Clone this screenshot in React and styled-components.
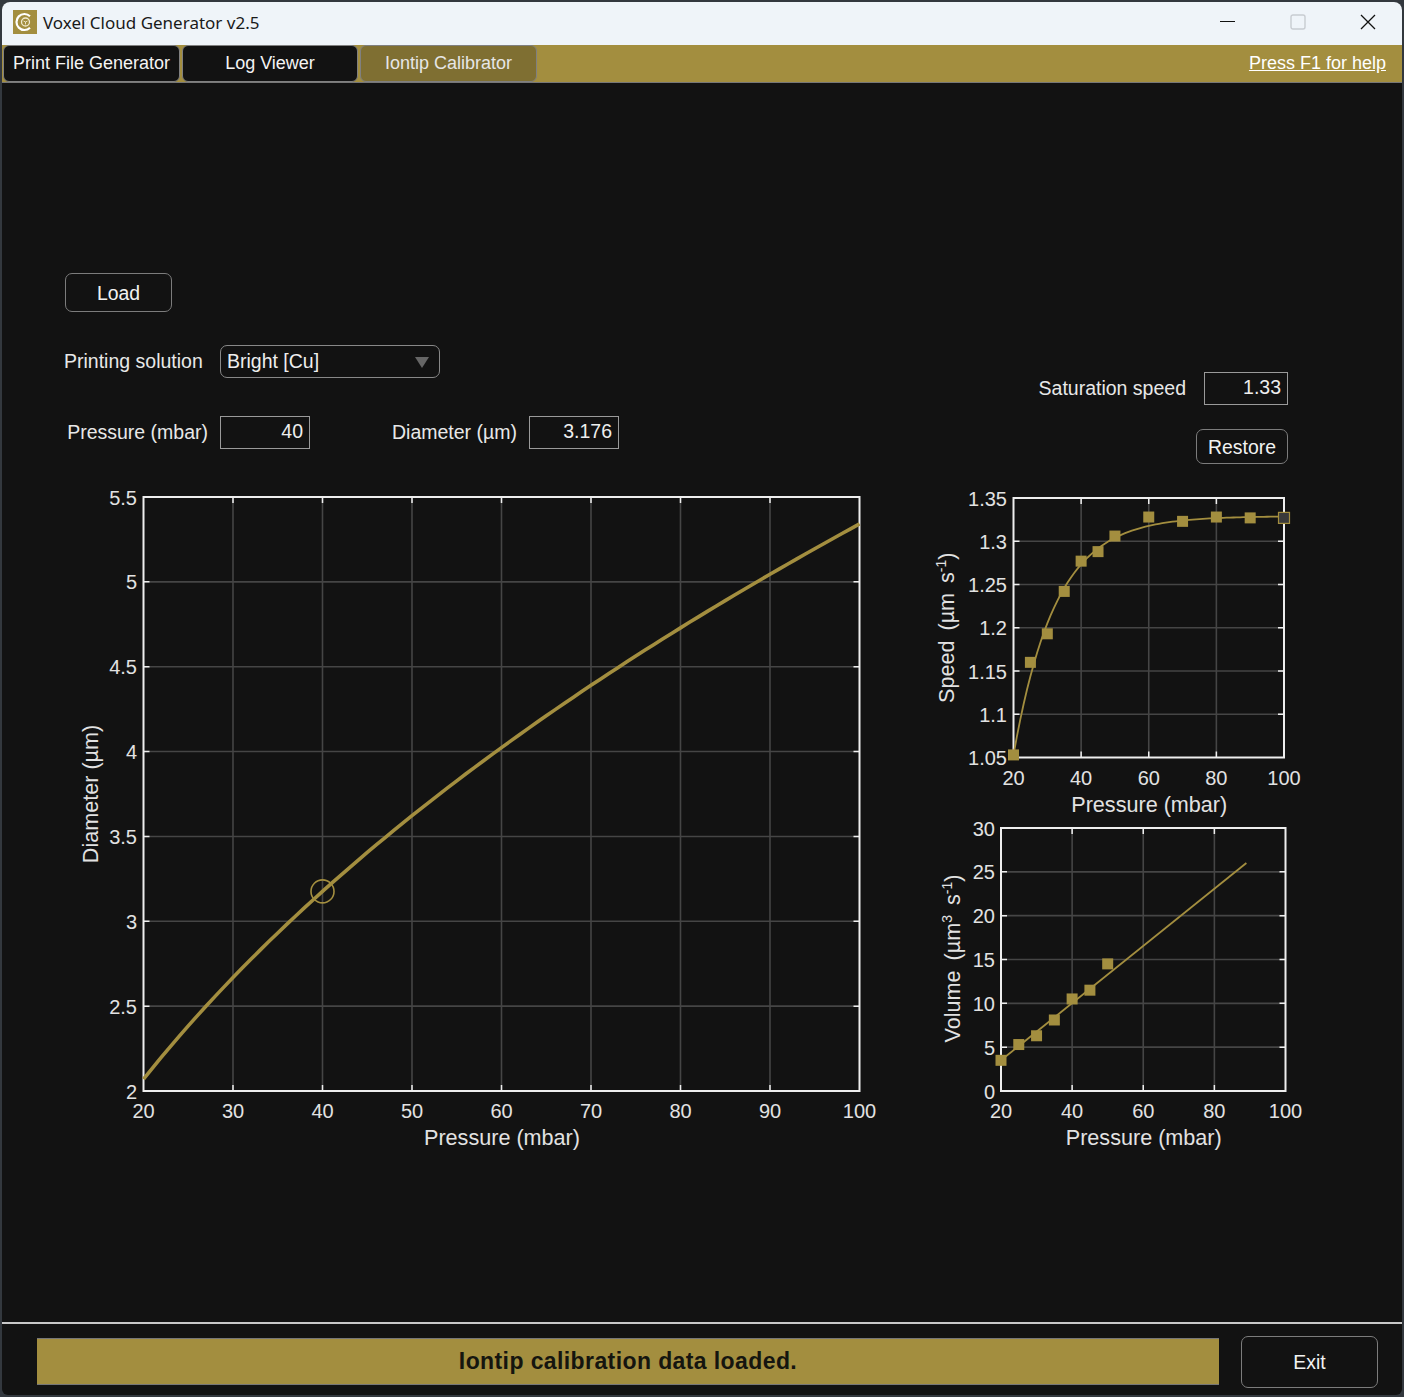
import React from 'react'
import styled, { createGlobalStyle } from 'styled-components'

const GOLD = '#a38e3f'

const GlobalStyle = createGlobalStyle`
  html, body {
    margin: 0;
    padding: 0;
    background: #33383e;
  }
  body {
    font-family: "Liberation Sans", Arial, sans-serif;
  }
`

const Window = styled.div`
  width: 1400px;
  height: 1393px;
  margin: 2px 2px;
  display: flex;
  flex-direction: column;
  background: #121212;
  border-radius: 8px 8px 6px 6px;
  overflow: hidden;
`

const TitleBar = styled.div`
  flex: none;
  height: 43px;
  box-sizing: border-box;
  display: flex;
  align-items: center;
  padding: 0 0 3px 11px;
  background: #eff4f9;
  color: #1a1a1a;
`

const TitleText = styled.span`
  margin-left: 6px;
  font-family: "Noto Sans", sans-serif;
  font-size: 17px;
  white-space: nowrap;
`

const WindowControls = styled.div`
  margin-left: auto;
  display: flex;
  align-items: center;
  padding-right: 26px;
  gap: 54px;
`

const TabStrip = styled.div`
  flex: none;
  height: 38px;
  box-sizing: border-box;
  display: flex;
  align-items: center;
  gap: 2px;
  padding: 0 16px 0 1px;
  background: ${GOLD};
  border-bottom: 1px solid #777;
`

const Tab = styled.div`
  width: ${(p) => p.$width}px;
  height: 37px;
  box-sizing: border-box;
  display: flex;
  align-items: center;
  justify-content: center;
  border: 1px solid #808080;
  border-radius: 6px;
  background: ${(p) => (p.$active ? '#7f6f32' : '#121212')};
  color: ${(p) => (p.$active ? '#e6e6e6' : '#f4f4f4')};
  font-size: 18px;
  white-space: nowrap;
`

const HelpLink = styled.a`
  margin-left: auto;
  color: #fff;
  font-size: 18px;
  text-decoration: underline;
`

const Main = styled.div`
  flex: none;
  height: 1241px;
  box-sizing: border-box;
  padding-top: 190px;
  border-bottom: 2px solid #c8c8c8;
`

const Controls = styled.div`
  display: flex;
  justify-content: space-between;
  padding: 0 114px 0 62px;
`

const LeftControls = styled.div`
  display: flex;
  flex-direction: column;
  align-items: flex-start;
`

const RightControls = styled.div`
  display: flex;
  flex-direction: column;
  align-items: flex-end;
  gap: 24px;
  padding-top: 99px;
`

const Button = styled.div`
  flex: none;
  width: ${(p) => p.$width}px;
  height: ${(p) => p.$height}px;
  margin-left: ${(p) => p.$left || 0}px;
  box-sizing: border-box;
  display: flex;
  align-items: center;
  justify-content: center;
  padding-top: 1px;
  border: 1px solid #7c7c7c;
  border-radius: 7px;
  color: #f2f2f2;
  font-size: 19.4px;
`

const Row = styled.div`
  display: flex;
  align-items: center;
  margin-top: ${(p) => p.$top || 0}px;
`

const Label = styled.span`
  width: ${(p) => (p.$width ? `${p.$width}px` : 'auto')};
  margin-right: ${(p) => p.$gap || 0}px;
  margin-left: ${(p) => p.$left || 0}px;
  text-align: ${(p) => p.$align || 'left'};
  color: #e8e8e8;
  font-size: 19.5px;
  white-space: nowrap;
`

const Select = styled.div`
  width: 220px;
  height: 33px;
  box-sizing: border-box;
  display: flex;
  align-items: center;
  justify-content: space-between;
  padding: 0 10px 1px 6px;
  border: 1px solid #888;
  border-radius: 7px;
  color: #eee;
  font-size: 19.5px;
`

const Caret = styled.span`
  width: 0;
  height: 0;
  margin-top: 2px;
  border-left: 7px solid transparent;
  border-right: 7px solid transparent;
  border-top: 11px solid #666;
`

const ValueBox = styled.div`
  width: ${(p) => p.$width}px;
  height: 33px;
  box-sizing: border-box;
  display: flex;
  align-items: center;
  justify-content: flex-end;
  padding: 0 6px 2px 0;
  border: 1px solid #9a9a9a;
  color: #eee;
  font-size: 19.5px;
`

const ChartRow = styled.div`
  display: flex;
  gap: 25px;
  margin-top: 16px;
  padding-left: 68px;
`

const SideCharts = styled.div`
  display: flex;
  flex-direction: column;
  padding-top: 5px;
`

const Svg = styled.svg`
  display: block;
  flex: none;
`

const TickLabel = styled.text`
  fill: #e2e2e2;
  font-size: 20px;
`

const AxisLabel = styled.text`
  fill: #e2e2e2;
  font-size: 21.6px;
  text-anchor: middle;
  white-space: pre;
  word-spacing: ${(p) => (p.$tight ? '-1px' : 'normal')};
`

const Footer = styled.div`
  flex: 1;
  display: flex;
  align-items: center;
  gap: 22px;
  padding: 4px 24px 0 35px;
`

const Status = styled.div`
  width: 1182px;
  height: 47px;
  box-sizing: border-box;
  display: flex;
  align-items: center;
  justify-content: center;
  background: ${GOLD};
  border-top: 1px solid #777;
  border-bottom: 1px solid #777;
  color: #15150f;
  font-size: 23px;
  font-weight: 700;
  letter-spacing: 0.4px;
`

const AppIcon = () => (
  <svg width="24" height="24" viewBox="0 0 24 24">
    <rect width="24" height="24" fill={GOLD} />
    <path d="M17 6.2a8 8 0 1 0 0 11.6" fill="none" stroke="#fff" strokeWidth="2.2" />
    <circle cx="12.5" cy="12" r="4" fill="none" stroke="#f1ead0" strokeWidth="1.3" />
    <path d="M10.5 11l2 1 2-1M12.5 12v2.4" fill="none" stroke="#f1ead0" strokeWidth="0.9" />
  </svg>
)

const MinimizeIcon = () => (
  <svg width="16" height="16" viewBox="0 0 16 16">
    <path d="M0 7.5h15" stroke="#111" strokeWidth="1.2" />
  </svg>
)

const MaximizeIcon = () => (
  <svg width="16" height="16" viewBox="0 0 16 16">
    <rect x="1" y="1" width="14" height="14" rx="2" fill="none" stroke="#c8ccd1" strokeWidth="1.4" />
  </svg>
)

const CloseIcon = () => (
  <svg width="16" height="16" viewBox="0 0 16 16">
    <path d="M1 1l14 14M15 1L1 15" stroke="#111" strokeWidth="1.3" />
  </svg>
)

const range = (from, to, step) => {
  const out = []
  for (let v = from; v <= to + 1e-9; v += step) out.push(Math.round(v * 1000) / 1000)
  return out
}

// the plots are drawn in page pixels, so the viewBox is the area of the page
const Chart = ({ view, box, xlim, ylim, xticks, yticks, xlabel, ylabel, labelX, tickEnd, curve, curveWidth, markers, children }) => {
  const [x0, y0, x1, y1] = box
  const sx = (v) => x0 + ((v - xlim[0]) / (xlim[1] - xlim[0])) * (x1 - x0)
  const sy = (v) => y1 - ((v - ylim[0]) / (ylim[1] - ylim[0])) * (y1 - y0)
  const path = 'M' + curve.map(([a, b]) => `${sx(a).toFixed(2)} ${sy(b).toFixed(2)}`).join('L')
  return (
    <Svg width={view[2]} height={view[3]} viewBox={view.join(' ')}>
      {xticks.slice(1, -1).map((t) => (
        <line key={t} x1={sx(t)} x2={sx(t)} y1={y0} y2={y1} stroke="#454545" strokeWidth="1.6" />
      ))}
      {yticks.slice(1, -1).map((t) => (
        <line key={t} x1={x0} x2={x1} y1={sy(t)} y2={sy(t)} stroke="#454545" strokeWidth="1.6" />
      ))}
      {xticks.slice(1, -1).map((t) => (
        <path key={t} d={`M${sx(t)} ${y0}v6M${sx(t)} ${y1}v-6`} stroke="#eee" strokeWidth="1.5" />
      ))}
      {yticks.slice(1, -1).map((t) => (
        <path key={t} d={`M${x0} ${sy(t)}h6M${x1} ${sy(t)}h-6`} stroke="#eee" strokeWidth="1.5" />
      ))}
      <rect x={x0} y={y0} width={x1 - x0} height={y1 - y0} fill="none" stroke="#eee" strokeWidth="2" />
      <path d={path} fill="none" stroke={GOLD} strokeWidth={curveWidth} />
      {markers && markers.map(([a, b, dark]) => (
        <rect
          key={a}
          x={sx(a) - 5.5}
          y={sy(b) - 5.5}
          width="11"
          height="11"
          fill={dark ? '#3a3a3a' : GOLD}
          stroke={dark ? GOLD : 'none'}
          strokeWidth="1.2"
        />
      ))}
      {children && children(sx, sy)}
      {xticks.map((t) => (
        <TickLabel key={t} x={sx(t)} y={y1 + 27} textAnchor="middle">{t}</TickLabel>
      ))}
      {yticks.map((t) => (
        <TickLabel key={t} x={tickEnd} y={sy(t) + 7.5} textAnchor="end">{t}</TickLabel>
      ))}
      <AxisLabel x={(x0 + x1) / 2 + 0.5} y={y1 + 54}>{xlabel}</AxisLabel>
      <AxisLabel $tight={ylabel.tight} transform={`translate(${labelX} ${(y0 + y1) / 2 + (ylabel.shift || 0)}) rotate(-90)`}>
        {ylabel.content}
      </AxisLabel>
    </Svg>
  )
}

const diameterCurve = range(20, 100, 1).map((p) => {
  const u = Math.log(p / 40)
  return [p, 3.176 * Math.exp(0.596 * u - 0.0313 * u * u)]
})

const speedCurve = range(20, 100, 1).map((p) => [p, 1.329 - 0.276 * Math.exp(-(p - 20) / 12.5)])

const speedMarkers = [
  [20, 1.053], [25, 1.16], [30, 1.193], [35, 1.242], [40, 1.277], [45, 1.288],
  [50, 1.306], [60, 1.328], [70, 1.323], [80, 1.328], [90, 1.327], [100, 1.327, true],
]

const volumeMarkers = [
  [20, 3.5], [25, 5.3], [30, 6.3], [35, 8.1], [40, 10.5], [45, 11.5], [50, 14.5],
]

const Sup = ({ children }) => (
  <tspan dy="-8" fontSize="14">{children}</tspan>
)

export default function App() {
  return (
    <>
      <GlobalStyle />
      <Window>
        <TitleBar>
          <AppIcon />
          <TitleText>Voxel Cloud Generator v2.5</TitleText>
          <WindowControls>
            <MinimizeIcon />
            <MaximizeIcon />
            <CloseIcon />
          </WindowControls>
        </TitleBar>
        <TabStrip>
          <Tab $width={177}>Print File Generator</Tab>
          <Tab $width={176}>Log Viewer</Tab>
          <Tab $width={177} $active>Iontip Calibrator</Tab>
          <HelpLink>Press F1 for help</HelpLink>
        </TabStrip>
        <Main>
          <Controls>
            <LeftControls>
              <Button $width={107} $height={39} $left={1}>Load</Button>
              <Row $top={33}>
                <Label $width={156}>Printing solution</Label>
                <Select>
                  Bright [Cu]
                  <Caret />
                </Select>
              </Row>
              <Row $top={38}>
                <Label $width={144} $gap={12} $align="right">Pressure (mbar)</Label>
                <ValueBox $width={90}>40</ValueBox>
                <Label $left={82} $gap={12}>Diameter (µm)</Label>
                <ValueBox $width={90}>3.176</ValueBox>
              </Row>
            </LeftControls>
            <RightControls>
              <Row>
                <Label $gap={18}>Saturation speed</Label>
                <ValueBox $width={84}>1.33</ValueBox>
              </Row>
              <Button $width={92} $height={35}>Restore</Button>
            </RightControls>
          </Controls>
          <ChartRow>
            <Chart
              view={[70, 480, 830, 680]}
              box={[143.5, 497, 859.5, 1091]}
              xlim={[20, 100]}
              ylim={[2, 5.5]}
              xticks={range(20, 100, 10)}
              yticks={range(2, 5.5, 0.5)}
              xlabel="Pressure (mbar)"
              ylabel={{ content: 'Diameter (µm)' }}
              labelX={98}
              tickEnd={137}
              curve={diameterCurve}
              curveWidth={3.6}
            >
              {(sx, sy) => (
                <circle cx={sx(40)} cy={sy(3.176)} r="11.5" fill="none" stroke={GOLD} strokeWidth="1.6" />
              )}
            </Chart>
            <SideCharts>
              <Chart
                view={[925, 485, 385, 332]}
                box={[1013.5, 498, 1284, 757.5]}
                xlim={[20, 100]}
                ylim={[1.05, 1.35]}
                xticks={range(20, 100, 20)}
                yticks={range(1.05, 1.35, 0.05)}
                xlabel="Pressure (mbar)"
                ylabel={{
                  tight: true,
                  content: (
                    <>
                      {'Speed  (µm  s'}
                      <Sup>-1</Sup>
                      <tspan dy="8">)</tspan>
                    </>
                  ),
                }}
                labelX={954}
                tickEnd={1007}
                curve={speedCurve}
                curveWidth={1.8}
                markers={speedMarkers}
              />
              <Chart
                view={[925, 817, 385, 338]}
                box={[1001, 828, 1285.5, 1091]}
                xlim={[20, 100]}
                ylim={[0, 30]}
                xticks={range(20, 100, 20)}
                yticks={range(0, 30, 5)}
                xlabel="Pressure (mbar)"
                ylabel={{
                  tight: true,
                  shift: -1,
                  content: (
                    <>
                      {'Volume  (µm'}
                      <Sup>3</Sup>
                      <tspan dy="8">{'  s'}</tspan>
                      <Sup>-1</Sup>
                      <tspan dy="8">)</tspan>
                    </>
                  ),
                }}
                labelX={960}
                tickEnd={995}
                curve={[[20, 3.5], [89, 26]]}
                curveWidth={1.8}
                markers={volumeMarkers}
              />
            </SideCharts>
          </ChartRow>
        </Main>
        <Footer>
          <Status>Iontip calibration data loaded.</Status>
          <Button $width={137} $height={52}>Exit</Button>
        </Footer>
      </Window>
    </>
  )
}
